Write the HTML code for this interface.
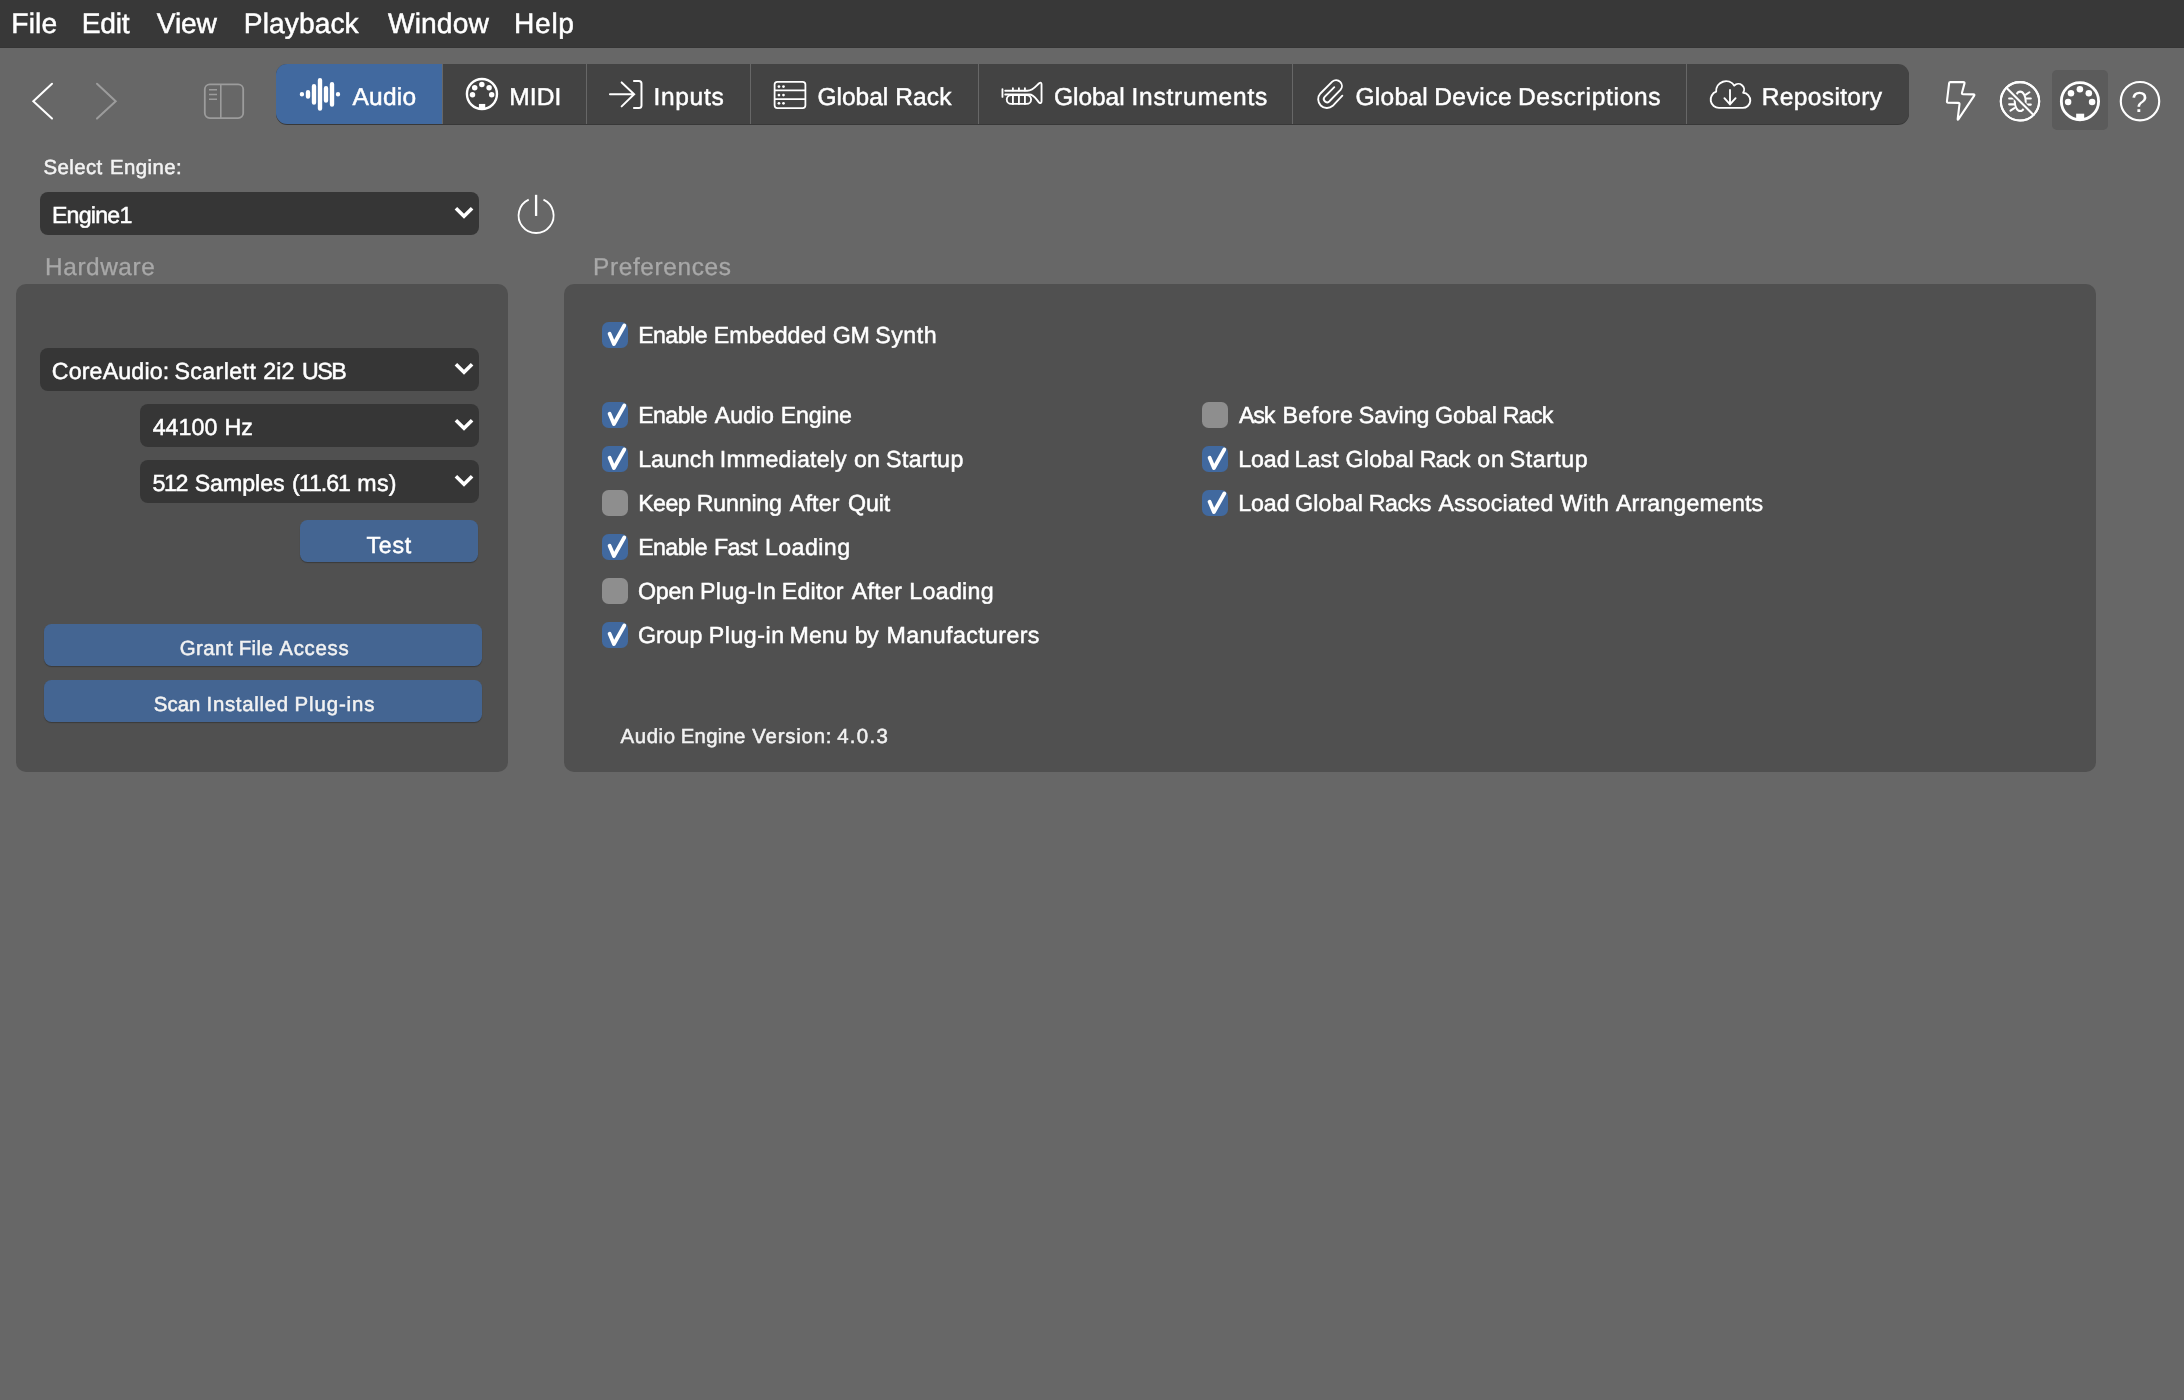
<!DOCTYPE html>
<html lang="en">
<head>
<meta charset="utf-8">
<title>Audio Preferences</title>
<style>
html,body{margin:0;padding:0}
body{width:2184px;height:1400px;overflow:hidden;background:#676767;position:relative;font-family:"Liberation Sans",sans-serif;}
.abs,svg.i{position:absolute}
.t{position:absolute;white-space:nowrap;display:block;text-rendering:geometricPrecision;color:#fff;-webkit-text-stroke:0.5px}
#txt{position:absolute;left:0;top:0;width:2184px;height:1400px;will-change:transform}
#menubar{left:0;top:0;width:2184px;height:47px;background:#383838;border-bottom:1px solid #353535}
#tabbar{left:276px;top:64px;width:1633px;height:60px;background:#434343;border-radius:11px;box-shadow:0 1px 0.5px rgba(0,0,0,.45);overflow:hidden}
#tabbar .on{position:absolute;left:0;top:0;width:166px;height:60px;background:#41699f}
#tabbar .sep{position:absolute;top:0;width:1px;height:60px;background:#676767}
.panel{background:#505050;border-radius:10px}
.dd{background:#363636;border-radius:8px;height:43px}
.btn{background:#446592;border-radius:7.5px;box-shadow:0 1px 1px rgba(0,0,0,.28)}
.cb{width:26px;height:26px;border-radius:6.5px;background:#8e8e8e}
.cb.on{background:#41699f}
#hl{left:2052px;top:70px;width:56px;height:60px;border-radius:5px;background:#5b5b5b}
</style>
</head>
<body>
<div id="menubar" class="abs"></div>
<div id="tabbar" class="abs">
  <div class="on"></div>
  <div class="sep" style="left:166px"></div>
  <div class="sep" style="left:310px"></div>
  <div class="sep" style="left:474px"></div>
  <div class="sep" style="left:702px"></div>
  <div class="sep" style="left:1016px"></div>
  <div class="sep" style="left:1410px"></div>
</div>
<div id="hl" class="abs"></div>

<!-- panels -->
<div class="abs panel" style="left:16px;top:284px;width:492px;height:487.5px"></div>
<div class="abs panel" style="left:564px;top:284px;width:1532px;height:487.5px"></div>

<!-- dropdowns -->
<div class="abs dd" style="left:40px;top:192px;width:439px"></div>
<div class="abs dd" style="left:40px;top:348px;width:439px"></div>
<div class="abs dd" style="left:140px;top:404px;width:339px"></div>
<div class="abs dd" style="left:140px;top:460px;width:339px"></div>

<!-- buttons -->
<div class="abs btn" style="left:300px;top:520px;width:178px;height:42px"></div>
<div class="abs btn" style="left:44px;top:624px;width:438px;height:42px"></div>
<div class="abs btn" style="left:44px;top:680px;width:438px;height:42px"></div>

<!-- checkboxes -->
<div class="abs cb on" style="left:602px;top:322px"></div>
<div class="abs cb on" style="left:602px;top:402px"></div>
<div class="abs cb on" style="left:602px;top:446px"></div>
<div class="abs cb"    style="left:602px;top:490px"></div>
<div class="abs cb on" style="left:602px;top:534px"></div>
<div class="abs cb"    style="left:602px;top:578px"></div>
<div class="abs cb on" style="left:602px;top:622px"></div>
<div class="abs cb"    style="left:1202px;top:402px"></div>
<div class="abs cb on" style="left:1202px;top:446px"></div>
<div class="abs cb on" style="left:1202px;top:490px"></div>

<!-- nav arrows + sidebar -->
<svg class="i" style="left:0;top:48px" width="280" height="100" viewBox="0 48 280 100" fill="none">
  <polyline points="52,83.8 33.3,101.2 52,118.6" stroke="#ffffff" stroke-width="2" stroke-linecap="round" stroke-linejoin="miter"/>
  <polyline points="97,83.8 115.7,101.2 97,118.6" stroke="#9c9c9c" stroke-width="2" stroke-linecap="round" stroke-linejoin="miter"/>
  <rect x="204.8" y="84.3" width="38.4" height="33.8" rx="5" stroke="#9c9c9c" stroke-width="1.8"/>
  <path d="M220.8,84.3V118.1M209,89.7h8M209,94.5h8M209,99.3h8" stroke="#9c9c9c" stroke-width="1.6"/>
</svg>

<!-- audio waveform -->
<svg class="i" style="left:290px;top:70px" width="60" height="48" viewBox="0 0 1750 1400" fill="none" stroke="#fff" stroke-width="128" stroke-linecap="round">
  <path d="M348,708v.1M525,650V772M700,474V950M875,297V1125M1050,530V892M1225,412V1005M1400,708v.1"/>
</svg>

<!-- MIDI tab icon -->
<svg class="i" style="left:455px;top:70px" width="60" height="48" viewBox="0 0 1750 1400">
  <circle cx="786" cy="701" r="438" fill="none" stroke="#fff" stroke-width="70"/>
  <g fill="#fff">
    <circle cx="783" cy="420" r="80"/><circle cx="575" cy="520" r="80"/><circle cx="995" cy="520" r="80"/>
    <circle cx="510" cy="722" r="80"/><circle cx="1070" cy="722" r="80"/>
    <rect x="698" y="990" width="184" height="160"/>
  </g>
</svg>

<!-- Inputs icon -->
<svg class="i" style="left:600px;top:70px" width="60" height="48" viewBox="0 0 1750 1400" fill="none" stroke="#fff" stroke-width="58" stroke-linecap="round" stroke-linejoin="miter">
  <path d="M290,708H990M632,362L996,708L632,1062"/>
  <path d="M990,322H1135Q1210,322 1210,397V1035Q1210,1110 1135,1110H990"/>
</svg>

<!-- Global Rack icon -->
<svg class="i" style="left:760px;top:70px" width="60" height="48" viewBox="0 0 1750 1400" fill="none" stroke="#fff" stroke-width="52">
  <rect x="426" y="346" width="898" height="763" rx="80"/>
  <path d="M426,597H1324M426,847H1324"/>
  <g fill="#fff" stroke="none">
    <circle cx="553" cy="482" r="40"/><circle cx="685" cy="482" r="40"/>
    <circle cx="553" cy="730" r="40"/><circle cx="685" cy="730" r="40"/>
    <circle cx="553" cy="973" r="40"/><circle cx="685" cy="973" r="40"/>
  </g>
</svg>

<!-- Trumpet icon -->
<svg class="i" style="left:992px;top:70px" width="60" height="48" viewBox="0 0 1750 1400" fill="none" stroke="#fff" stroke-width="54" stroke-linecap="round" stroke-linejoin="round">
  <path d="M305,556V786"/>
  <path d="M385,605H1030C1200,605 1290,460 1375,385Q1445,340 1445,420V915Q1445,990 1375,950C1290,860 1230,715 1090,715H385"/>
  <path d="M560,730H1010A130,130 0 0 1 1010,990H560A130,130 0 0 1 560,730Z"/>
  <path d="M610,530V600M785,530V600M960,530V600M610,730V990M785,730V990M960,730V990"/>
</svg>

<!-- Paperclip icon -->
<svg class="i" style="left:1300px;top:70px" width="60" height="48" viewBox="0 0 1750 1400" fill="none" stroke="#fff" stroke-width="55" stroke-linecap="round">
  <path d="M1235,750L955,1045A255,255 0 0 1 595,685L940,340A170,170 0 0 1 1180,580L852,917A95,95 0 0 1 718,783L1000,500"/>
</svg>

<!-- Cloud download icon -->
<svg class="i" style="left:1700px;top:70px" width="60" height="48" viewBox="0 0 1750 1400" fill="none" stroke="#fff" stroke-width="55" stroke-linecap="round" stroke-linejoin="round">
  <path d="M555,1105A243,243 0 0 1 470,634A290,290 0 0 1 1000,455A167,167 0 0 1 1258,665A220,220 0 0 1 1235,1105Z"/>
  <path d="M875,580V995M712,822L875,1000L1038,822" stroke-linejoin="miter"/>
</svg>

<!-- lightning + bug -->
<svg class="i" style="left:1930px;top:70px" width="120" height="64" viewBox="0 0 2184 1165" fill="none" stroke="#fff" stroke-width="38" stroke-linecap="round" stroke-linejoin="round">
  <path d="M348,239Q350,220 370,220L606,220Q635,220 627,248L582,413Q575,440 603,441L788,444Q820,445 802,472L518,893Q500,920 504,888L537,622Q540,598 515,598L329,595Q305,595 308,571Z"/>
  <circle cx="1638" cy="570" r="349"/>
  <ellipse cx="1642" cy="570" rx="100" ry="176"/>
  <path d="M1745,450L1810,405M1755,520H1835M1755,630H1835M1440,520H1525M1440,625H1525M1465,740L1535,695"/>
  <path d="M1391,324L1885,818" stroke="#676767" stroke-width="100" stroke-linecap="butt"/>
  <path d="M1391,324L1885,818"/>
  <circle cx="1638" cy="570" r="349"/>
</svg>

<!-- MIDI big + help circle -->
<svg class="i" style="left:2044px;top:64px" width="130" height="72" viewBox="0 0 2184 1210">
  <circle cx="604" cy="625" r="313" fill="none" stroke="#fff" stroke-width="48"/>
  <g fill="#fff">
    <circle cx="603" cy="425" r="55"/><circle cx="453" cy="492" r="55"/><circle cx="753" cy="492" r="55"/>
    <circle cx="405" cy="638" r="55"/><circle cx="808" cy="638" r="55"/>
    <rect x="540" y="835" width="135" height="110"/>
  </g>
  <circle cx="1613" cy="625" r="323" fill="none" stroke="#fff" stroke-width="36"/>
</svg>

<!-- power icon -->
<svg class="i" style="left:430px;top:190px" width="140" height="50" viewBox="0 0 2184 780" fill="none" stroke="#fff" stroke-linecap="butt">
  <path d="M1540,150A273,273 0 1 0 1770,150" stroke-width="29"/>
  <path d="M1655,75V405" stroke-width="36"/>
</svg>

<!-- dropdown chevrons -->
<svg class="i" style="left:450px;top:200px" width="28" height="24" viewBox="450 200 28 24" fill="none" stroke="#fff" stroke-width="3.6"><polyline points="455.9,208.2 464,216.3 472.1,208.2"/></svg>
<svg class="i" style="left:450px;top:356px" width="28" height="24" viewBox="450 200 28 24" fill="none" stroke="#fff" stroke-width="3.6"><polyline points="455.9,208.2 464,216.3 472.1,208.2"/></svg>
<svg class="i" style="left:450px;top:412px" width="28" height="24" viewBox="450 200 28 24" fill="none" stroke="#fff" stroke-width="3.6"><polyline points="455.9,208.2 464,216.3 472.1,208.2"/></svg>
<svg class="i" style="left:450px;top:468px" width="28" height="24" viewBox="450 200 28 24" fill="none" stroke="#fff" stroke-width="3.6"><polyline points="455.9,208.2 464,216.3 472.1,208.2"/></svg>

<!-- checkmarks -->
<svg class="i" style="left:602px;top:322px" width="26" height="26" viewBox="0 0 26 26" fill="none" stroke="#fff" stroke-width="3.8" stroke-linecap="round" stroke-linejoin="round"><polyline points="7.6,11.8 11.9,22.1 22.3,3.5"/></svg>
<svg class="i" style="left:602px;top:402px" width="26" height="26" viewBox="0 0 26 26" fill="none" stroke="#fff" stroke-width="3.8" stroke-linecap="round" stroke-linejoin="round"><polyline points="7.6,11.8 11.9,22.1 22.3,3.5"/></svg>
<svg class="i" style="left:602px;top:446px" width="26" height="26" viewBox="0 0 26 26" fill="none" stroke="#fff" stroke-width="3.8" stroke-linecap="round" stroke-linejoin="round"><polyline points="7.6,11.8 11.9,22.1 22.3,3.5"/></svg>
<svg class="i" style="left:602px;top:534px" width="26" height="26" viewBox="0 0 26 26" fill="none" stroke="#fff" stroke-width="3.8" stroke-linecap="round" stroke-linejoin="round"><polyline points="7.6,11.8 11.9,22.1 22.3,3.5"/></svg>
<svg class="i" style="left:602px;top:622px" width="26" height="26" viewBox="0 0 26 26" fill="none" stroke="#fff" stroke-width="3.8" stroke-linecap="round" stroke-linejoin="round"><polyline points="7.6,11.8 11.9,22.1 22.3,3.5"/></svg>
<svg class="i" style="left:1202px;top:446px" width="26" height="26" viewBox="0 0 26 26" fill="none" stroke="#fff" stroke-width="3.8" stroke-linecap="round" stroke-linejoin="round"><polyline points="7.6,11.8 11.9,22.1 22.3,3.5"/></svg>
<svg class="i" style="left:1202px;top:490px" width="26" height="26" viewBox="0 0 26 26" fill="none" stroke="#fff" stroke-width="3.8" stroke-linecap="round" stroke-linejoin="round"><polyline points="7.6,11.8 11.9,22.1 22.3,3.5"/></svg>

<div id="txt">
<span class="t" style="left:11px;top:5.4px;font-size:28.2px;line-height:37px"><span class="w" style="letter-spacing:0.11px;margin-left:0.33px">File</span></span>
<span class="t" style="left:81px;top:5.4px;font-size:28.2px;line-height:37px"><span class="w" style="letter-spacing:-0.17px;margin-left:0.63px">Edit</span></span>
<span class="t" style="left:155px;top:5.4px;font-size:28.2px;line-height:37px"><span class="w" style="letter-spacing:-0.21px;margin-left:1.82px">View</span></span>
<span class="t" style="left:243px;top:5.4px;font-size:28.2px;line-height:37px"><span class="w" style="letter-spacing:0.07px;margin-left:0.81px">Playback</span></span>
<span class="t" style="left:386px;top:5.4px;font-size:28.2px;line-height:37px"><span class="w" style="letter-spacing:0.1px;margin-left:2.03px">Window</span></span>
<span class="t" style="left:514px;top:5.4px;font-size:28.2px;line-height:37px"><span class="w" style="letter-spacing:0.69px;margin-left:-0.01px">Help</span></span>
<span class="t" style="left:350px;top:82.2px;font-size:24.5px;line-height:32px"><span class="w" style="letter-spacing:0.22px;margin-left:2.52px">Audio</span></span>
<span class="t" style="left:509px;top:82.2px;font-size:24.5px;line-height:32px"><span class="w" style="letter-spacing:0.16px;margin-left:0.23px">MIDI</span></span>
<span class="t" style="left:653px;top:82.2px;font-size:24.5px;line-height:32px"><span class="w" style="letter-spacing:0.68px;margin-left:0.49px">Inputs</span></span>
<span class="t" style="left:816px;top:82.2px;font-size:24.5px;line-height:32px"><span class="w" style="letter-spacing:0px;margin-left:1.47px">Global</span> <span class="w" style="letter-spacing:0.21px;margin-left:0.02px">Rack</span></span>
<span class="t" style="left:1052px;top:82.2px;font-size:24.5px;line-height:32px"><span class="w" style="letter-spacing:-0.04px;margin-left:2px">Global</span> <span class="w" style="letter-spacing:0.77px;margin-left:0.14px">Instruments</span></span>
<span class="t" style="left:1354px;top:82.2px;font-size:24.5px;line-height:32px"><span class="w" style="letter-spacing:0.3px;margin-left:1.47px">Global</span> <span class="w" style="letter-spacing:0.51px;margin-left:-0.79px">Device</span> <span class="w" style="letter-spacing:0.72px;margin-left:-0.99px">Descriptions</span></span>
<span class="t" style="left:1761px;top:82.2px;font-size:24.5px;line-height:32px"><span class="w" style="letter-spacing:0.36px;margin-left:0.78px">Repository</span></span>
<span class="t" style="left:42px;top:155.4px;font-size:20.4px;line-height:27px;color:#f2f2f2"><span class="w" style="letter-spacing:0.4px;margin-left:1.61px">Select</span> <span class="w" style="letter-spacing:0.42px;margin-left:1.56px">Engine:</span></span>
<span class="t" style="left:51px;top:199.75px;font-size:23.2px;line-height:30px"><span class="w" style="letter-spacing:-0.77px;margin-left:0.88px">Engine1</span></span>
<span class="t" style="left:45px;top:252.4px;font-size:24.4px;line-height:32px;color:#a8a8a8;-webkit-text-stroke-width:0.3px"><span class="w" style="letter-spacing:0.56px;margin-left:0.08px">Hardware</span></span>
<span class="t" style="left:592px;top:252.4px;font-size:24.4px;line-height:32px;color:#a8a8a8;-webkit-text-stroke-width:0.3px"><span class="w" style="letter-spacing:0.64px;margin-left:1.09px">Preferences</span></span>
<span class="t" style="left:50px;top:355.8px;font-size:23.2px;line-height:30px"><span class="w" style="letter-spacing:0.16px;margin-left:1.77px">CoreAudio:</span> <span class="w" style="letter-spacing:0.4px;margin-left:-1.37px">Scarlett</span> <span class="w" style="letter-spacing:0.1px;margin-left:0.45px">2i2</span> <span class="w" style="letter-spacing:-1.56px;margin-left:1.19px">USB</span></span>
<span class="t" style="left:150px;top:411.7px;font-size:23.2px;line-height:30px"><span class="w" style="letter-spacing:0.06px;margin-left:2.65px">44100</span> <span class="w" style="letter-spacing:-0.06px;margin-left:0.7px">Hz</span></span>
<span class="t" style="left:151px;top:467.7px;font-size:23.2px;line-height:30px"><span class="w" style="letter-spacing:-1.28px;margin-left:1.4px">512</span> <span class="w" style="letter-spacing:-0.03px;margin-left:0.93px">Samples</span> <span class="w" style="letter-spacing:-1.03px;margin-left:1.02px">(11.61</span> <span class="w" style="letter-spacing:0.24px;margin-left:0.93px">ms)</span></span>
<span class="t" style="left:364px;top:529.6px;font-size:23.2px;line-height:30px"><span class="w" style="letter-spacing:0.73px;margin-left:2.46px">Test</span></span>
<span class="t" style="left:178px;top:635.7px;font-size:20.4px;line-height:27px;color:#f2f2f2"><span class="w" style="letter-spacing:0.45px;margin-left:1.79px">Grant</span> <span class="w" style="letter-spacing:0.45px;margin-left:-0.03px">File</span> <span class="w" style="letter-spacing:0.73px;margin-left:0.34px">Access</span></span>
<span class="t" style="left:152px;top:691.6px;font-size:20.4px;line-height:27px;color:#f2f2f2"><span class="w" style="letter-spacing:0.05px;margin-left:1.81px">Scan</span> <span class="w" style="letter-spacing:0.69px;margin-left:0.45px">Installed</span> <span class="w" style="letter-spacing:0.91px;margin-left:0.03px">Plug-ins</span></span>
<span class="t" style="left:637px;top:319.8px;font-size:23.2px;line-height:30px"><span class="w" style="letter-spacing:-0.56px;margin-left:1.13px">Enable</span> <span class="w" style="letter-spacing:0.06px;margin-left:0.4px">Embedded</span> <span class="w" style="letter-spacing:-0.48px;margin-left:-0.06px">GM</span> <span class="w" style="letter-spacing:0.54px;margin-left:-0.55px">Synth</span></span>
<span class="t" style="left:637px;top:399.9px;font-size:23.2px;line-height:30px"><span class="w" style="letter-spacing:-0.56px;margin-left:1.13px">Enable</span> <span class="w" style="letter-spacing:-0.07px;margin-left:1.38px">Audio</span> <span class="w" style="letter-spacing:-0.17px;margin-left:0.44px">Engine</span></span>
<span class="t" style="left:637px;top:443.9px;font-size:23.2px;line-height:30px"><span class="w" style="letter-spacing:0.02px;margin-left:1.13px">Launch</span> <span class="w" style="letter-spacing:0.19px;margin-left:-1.03px">Immediately</span> <span class="w" style="letter-spacing:0.35px;margin-left:0.57px">on</span> <span class="w" style="letter-spacing:0.42px;margin-left:-0.82px">Startup</span></span>
<span class="t" style="left:637px;top:487.9px;font-size:23.2px;line-height:30px"><span class="w" style="letter-spacing:-0.53px;margin-left:1.13px">Keep</span> <span class="w" style="letter-spacing:-0.22px;margin-left:0.21px">Running</span> <span class="w" style="letter-spacing:0.19px;margin-left:1.69px">After</span> <span class="w" style="letter-spacing:-0.08px;margin-left:1.74px">Quit</span></span>
<span class="t" style="left:637px;top:531.9px;font-size:23.2px;line-height:30px"><span class="w" style="letter-spacing:-0.56px;margin-left:1.13px">Enable</span> <span class="w" style="letter-spacing:-0.55px;margin-left:0.49px">Fast</span> <span class="w" style="letter-spacing:0.43px;margin-left:1.68px">Loading</span></span>
<span class="t" style="left:637px;top:575.9px;font-size:23.2px;line-height:30px"><span class="w" style="letter-spacing:-0.18px;margin-left:0.97px">Open</span> <span class="w" style="letter-spacing:0.43px;margin-left:-0.51px">Plug-In</span> <span class="w" style="letter-spacing:0.26px;margin-left:-1.19px">Editor</span> <span class="w" style="letter-spacing:0.28px;margin-left:1.51px">After</span> <span class="w" style="letter-spacing:0.32px;margin-left:0.65px">Loading</span></span>
<span class="t" style="left:637px;top:619.9px;font-size:23.2px;line-height:30px"><span class="w" style="letter-spacing:0.01px;margin-left:0.93px">Group</span> <span class="w" style="letter-spacing:0.53px;margin-left:-0.16px">Plug-in</span> <span class="w" style="letter-spacing:0.01px;margin-left:-1.51px">Menu</span> <span class="w" style="letter-spacing:-0.53px;margin-left:0.61px">by</span> <span class="w" style="letter-spacing:0.4px;margin-left:1.9px">Manufacturers</span></span>
<span class="t" style="left:1236px;top:399.9px;font-size:23.2px;line-height:30px"><span class="w" style="letter-spacing:-1.12px;margin-left:2.95px">Ask</span> <span class="w" style="letter-spacing:0.43px;margin-left:1.78px">Before</span> <span class="w" style="letter-spacing:-0.05px;margin-left:-1px">Saving</span> <span class="w" style="letter-spacing:0.02px;margin-left:-0.94px">Gobal</span> <span class="w" style="letter-spacing:-0.73px;margin-left:-0.55px">Rack</span></span>
<span class="t" style="left:1237px;top:443.9px;font-size:23.2px;line-height:30px"><span class="w" style="letter-spacing:-0.04px;margin-left:1.13px">Load</span> <span class="w" style="letter-spacing:0.11px;margin-left:-1.46px">Last</span> <span class="w" style="letter-spacing:0.22px;margin-left:0.27px">Global</span> <span class="w" style="letter-spacing:-0.72px;margin-left:-0.63px">Rack</span> <span class="w" style="letter-spacing:0.85px;margin-left:1.01px">on</span> <span class="w" style="letter-spacing:0.51px;margin-left:-1.32px">Startup</span></span>
<span class="t" style="left:1237px;top:487.9px;font-size:23.2px;line-height:30px"><span class="w" style="letter-spacing:-0.04px;margin-left:1.13px">Load</span> <span class="w" style="letter-spacing:0.17px;margin-left:-0.98px">Global</span> <span class="w" style="letter-spacing:-0.46px;margin-left:-0.9px">Racks</span> <span class="w" style="letter-spacing:0.17px;margin-left:1.21px">Associated</span> <span class="w" style="letter-spacing:0.64px;margin-left:0.54px">With</span> <span class="w" style="letter-spacing:0.15px;margin-left:-0.06px">Arrangements</span></span>
<span class="t" style="left:618px;top:723.7px;font-size:20.4px;line-height:27px;color:#f2f2f2"><span class="w" style="letter-spacing:0.57px;margin-left:2.57px">Audio</span> <span class="w" style="letter-spacing:0.25px;margin-left:-0.57px">Engine</span> <span class="w" style="letter-spacing:0.79px;margin-left:0.89px">Version:</span> <span class="w" style="letter-spacing:1.31px;margin-left:-0.75px">4.0.3</span></span>
<span class="t" style="left:2130px;top:84.3px;font-size:29px;line-height:38px;-webkit-text-stroke-width:0px"><span class="w" style="letter-spacing:0px;margin-left:1.36px">?</span></span>
</div>
</body>
</html>
